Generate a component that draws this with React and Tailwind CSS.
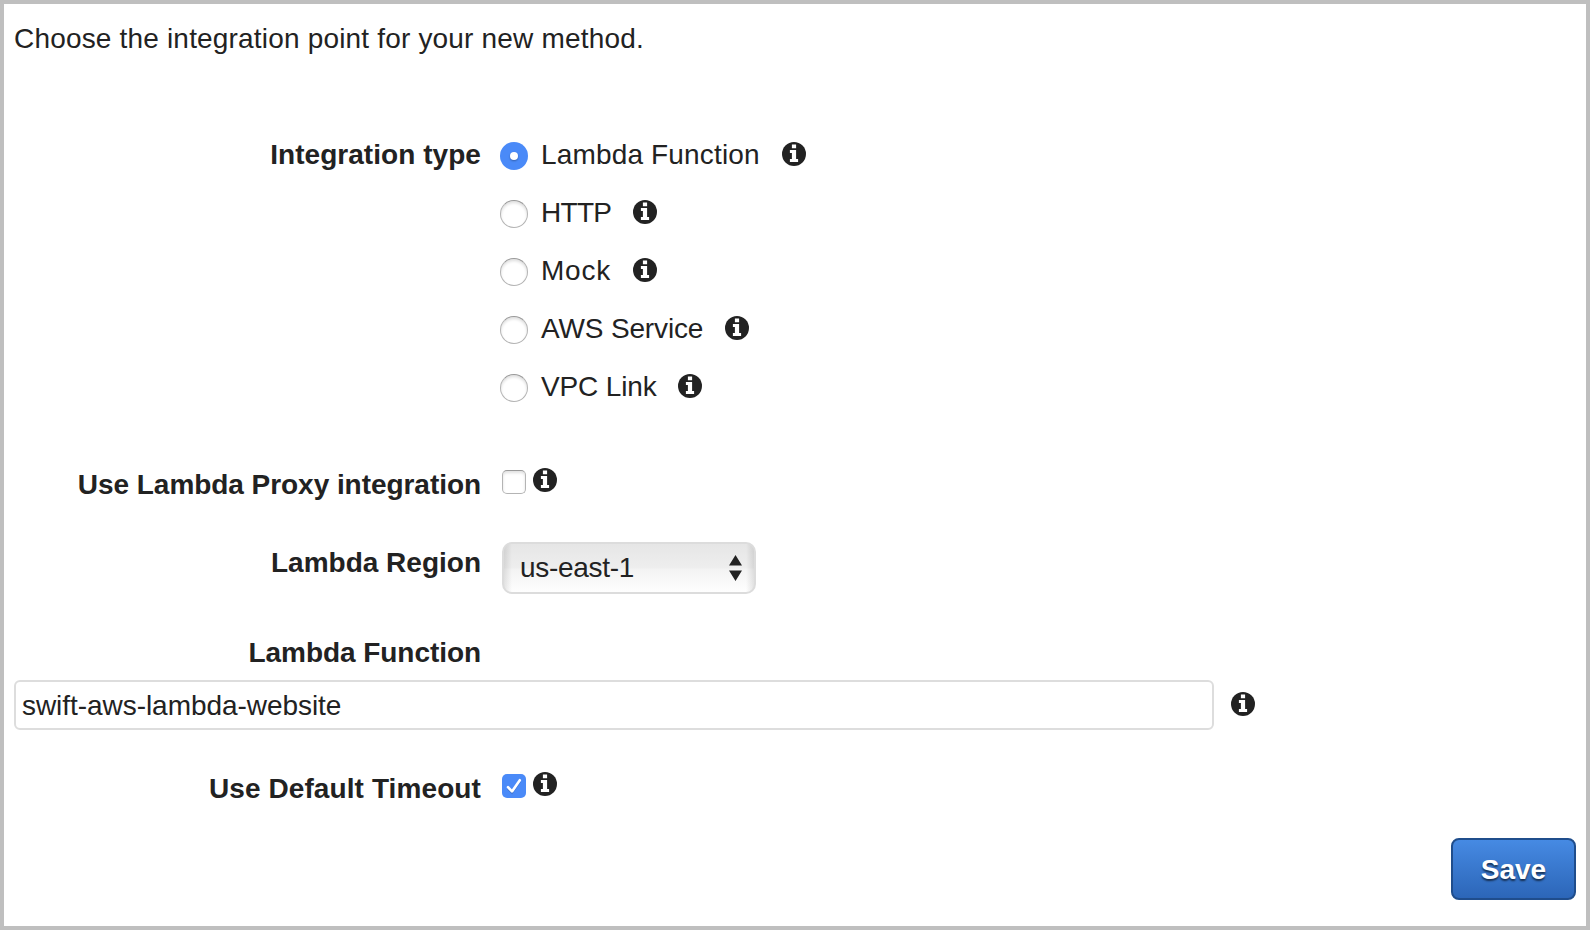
import React from "react";

function InfoIcon({ className = "" }) {
  return (
    <svg viewBox="0 0 24 24" className={`block h-6 w-6 shrink-0 ${className}`} aria-hidden="true">
      <circle cx="12" cy="12" r="12" fill="#222" />
      <path fill="#fff" d="M9.900 2.500h4.200v3.700H9.900zM7.900 8h6.200v9H16.100v3H7.900v-3h2v-6h-2z" />
    </svg>
  );
}

function Radio({ checked }) {
  return checked ? (
    <span className="mt-1 flex h-7 w-7 shrink-0 items-center justify-center rounded-full bg-[#4a8af8]">
      <span className="h-2 w-2 rounded-full bg-white shadow-[0_1px_2px_rgba(0,0,0,0.3)]" />
    </span>
  ) : (
    <span className="mt-1 h-7 w-7 shrink-0 rounded-full border border-[#b4b4b4] border-t-[#999] bg-white shadow-[inset_0_2px_3px_rgba(0,0,0,0.13)]" />
  );
}

function Checkbox({ checked }) {
  return checked ? (
    <span className="block h-6 w-6 shrink-0 rounded-[5px] bg-[#4a8af8]">
      <svg viewBox="0 0 24 24" className="block h-6 w-6" aria-hidden="true">
        <path d="M6 14.500 10 18.500 17.800 7.200" fill="none" stroke="#000" strokeOpacity=".15" strokeWidth="2.600" />
        <path d="M6 13.200 10 17.400 17.800 6.200" fill="none" stroke="#fff" strokeWidth="2.600" strokeLinecap="round" strokeLinejoin="round" />
      </svg>
    </span>
  ) : (
    <span className="block h-6 w-6 shrink-0 rounded-[5px] border border-[#b4b4b4] border-t-[#999] bg-white shadow-[inset_0_2px_3px_rgba(0,0,0,0.12)]" />
  );
}

function Label({ children, className = "" }) {
  return <div className={`h-8 w-[467px] shrink-0 text-right font-bold ${className}`}>{children}</div>;
}

const TYPES = [
  { name: "Lambda Function", style: "w-[241px] tracking-[0.16px]", checked: true },
  { name: "HTTP", style: "w-[92px] tracking-[-0.7px]" },
  { name: "Mock", style: "w-[92px] tracking-[0.8px]" },
  { name: "AWS Service", style: "w-[184px] tracking-[-0.15px]" },
  { name: "VPC Link", style: "w-[137px] tracking-[-0.15px]" },
];

export default function App() {
  return (
    <div className="flex h-[930px] w-[1590px] flex-col overflow-hidden whitespace-nowrap border-4 border-[#bfbfbf] bg-white px-2.5 pt-[18px] font-['Liberation_Sans',Arial,sans-serif] text-[28px] leading-[34px] text-[#222]">
      <p className="h-8 tracking-[0.18px]">Choose the integration point for your new method.</p>

      <div className="mt-[84px] flex">
        <Label className="tracking-[0.05px]">Integration type</Label>
        <div className="ml-[19px] flex flex-col gap-[26px]">
          {TYPES.map((t) => (
            <div key={t.name} className="flex h-8">
              <Radio checked={t.checked} />
              <span className={`ml-[13px] ${t.style}`}>{t.name}</span>
              <InfoIcon className="mt-1" />
            </div>
          ))}
        </div>
      </div>

      <div className="mt-[66px] flex h-8">
        <Label className="tracking-[-0.05px]">Use Lambda Proxy integration</Label>
        <div className="ml-[21px] mt-0.5">
          <Checkbox />
        </div>
        <InfoIcon className="ml-[7px]" />
      </div>

      <div className="mt-[42px] flex h-[52px]">
        <Label className="pt-1">Lambda Region</Label>
        <div className="ml-[21px] flex w-[254px] items-center justify-between rounded-[10px] border-2 border-[#dcdcdc] bg-[linear-gradient(to_right,rgba(0,0,0,0.12),transparent_10px,transparent_calc(100%-10px),rgba(0,0,0,0.12)),linear-gradient(to_bottom,#e5e5e5,#eeeeee_50%,#f3f3f3_52%,#ffffff)] bg-origin-border pl-4 pr-3">
          <span className="tracking-[-0.3px]">us-east-1</span>
          <svg viewBox="0 0 13 26" className="h-[26px] w-[13px]" aria-hidden="true">
            <path d="M6.500 0 13 10.500H0zM0 15.500h13L6.500 26z" fill="#222" />
          </svg>
        </div>
      </div>

      <Label className="mt-[42px] tracking-[-0.06px]">Lambda Function</Label>
      <div className="mt-3 flex h-[50px] items-center">
        <input
          className="h-[50px] w-[1200px] rounded-md border-2 border-[#ddd] bg-white px-1.5 pt-0.5 tracking-[-0.05px] outline-none"
          defaultValue="swift-aws-lambda-website"
        />
        <InfoIcon className="-mt-0.5 ml-[17px]" />
      </div>

      <div className="mt-[42px] flex h-8">
        <Label className="tracking-[0.1px]">Use Default Timeout</Label>
        <div className="ml-[21px] mt-0.5">
          <Checkbox checked />
        </div>
        <InfoIcon className="ml-[7px]" />
      </div>

      <button className="mt-[34px] h-[62px] w-[125px] self-end rounded-lg border-2 border-[#1f4d8c] bg-linear-to-b from-[#468ae3] to-[#2c66b8] pt-0.5 font-bold text-white [text-shadow:0_2px_2px_rgba(0,0,0,0.6)]">
        Save
      </button>
    </div>
  );
}
